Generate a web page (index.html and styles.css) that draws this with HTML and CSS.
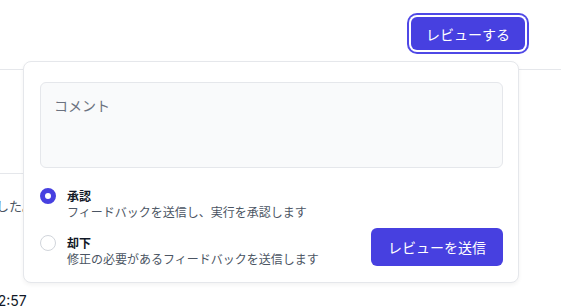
FILE: index.html
```html
<!DOCTYPE html>
<html lang="ja">
  <head>
    <meta charset="UTF-8" />
    <meta name="viewport" content="width=device-width, initial-scale=1.0" />
    <title>レビュー</title>
    <link rel="stylesheet" href="styles.css">
  </head>
  <body>
    <div class="header">
      <button class="btn review-btn">レビューする</button>
    </div>

    <div class="feed">
      <div class="entry"></div>
      <p class="note">実行のレビューを依頼しました。</p>
      <p class="time">12:57</p>
    </div>

    <div class="review-pop">
      <div class="comment">コメント</div>
      <div class="bottom">
        <div class="options">
          <label class="option">
            <span class="radio checked"></span>
            <span class="text">
              <b>承認</b>
              <span>フィードバックを送信し、実行を承認します</span>
            </span>
          </label>
          <label class="option">
            <span class="radio"></span>
            <span class="text">
              <b>却下</b>
              <span>修正の必要があるフィードバックを送信します</span>
            </span>
          </label>
        </div>
        <button class="btn submit-btn">レビューを送信</button>
      </div>
    </div>
  </body>
</html>
```

FILE: styles.css
```css
* {
  box-sizing: border-box;
}
html,
body {
  margin: 0;
  padding: 0;
}
body {
  width: 561px;
  height: 307px;
  overflow: hidden;
  position: relative;
  font-family: Inter, "Noto Sans CJK JP", sans-serif;
  color: #111827;
  background: #fff;
}
p {
  margin: 0;
}

.header {
  height: 70px;
  border-bottom: 1px solid #e5e7eb;
  display: flex;
  justify-content: flex-end;
  align-items: center;
  padding: 0 36px 2px 0;
}

.btn {
  border: none;
  background: #4740e0;
  color: #fff;
  font-family: "Noto Sans CJK JP", sans-serif;
  font-size: 14px;
  border-radius: 6px;
  cursor: pointer;
}
.review-btn {
  width: 114px;
  height: 33px;
  box-shadow: 0 0 0 2px #fff, 0 0 0 4px #4f48e6;
}

.feed {
  width: 600px;
  margin-left: -160px;
}
.feed .entry {
  height: 104px;
  border-bottom: 1px solid #e5e7eb;
}
.feed .note {
  margin-top: 23px;
  font-size: 13px;
  color: #4b5563;
  line-height: 18px;
}
.feed .time {
  margin-top: 76px;
  margin-left: 152px;
  font-size: 14px;
  line-height: 20px;
}

.review-pop {
  position: absolute;
  top: 61px;
  left: 23px;
  width: 496px;
  height: 222px;
  background: #fff;
  border: 1px solid #e5e7eb;
  border-radius: 8px;
  box-shadow: 0 2px 4px rgba(0, 0, 0, 0.05);
  padding: 20px 15px 15px 16px;
}
.comment {
  height: 86px;
  background: #f9fafb;
  border: 1px solid #e5e7eb;
  border-radius: 6px;
  padding: 12px 13px;
  font-size: 14px;
  line-height: 20px;
  color: #6b7280;
  font-family: "Noto Sans CJK JP", sans-serif;
}
.bottom {
  margin-top: 20px;
  display: flex;
  justify-content: space-between;
  align-items: flex-end;
}
.options {
  display: flex;
  flex-direction: column;
  gap: 15px;
}
.option {
  display: flex;
  gap: 11px;
  font-family: "Noto Sans CJK JP", sans-serif;
  font-size: 12px;
  line-height: 16px;
}
.option .text {
  display: flex;
  flex-direction: column;
  color: #4b5563;
}
.option b {
  color: #111827;
  font-weight: 700;
}
.radio {
  width: 16px;
  height: 16px;
  border-radius: 50%;
  border: 1px solid #d1d5db;
  background: #fff;
  flex-shrink: 0;
}
.radio.checked {
  border: 5px solid #4740e0;
}
.submit-btn {
  width: 132px;
  height: 38px;
  margin-bottom: 1px;
}
```
